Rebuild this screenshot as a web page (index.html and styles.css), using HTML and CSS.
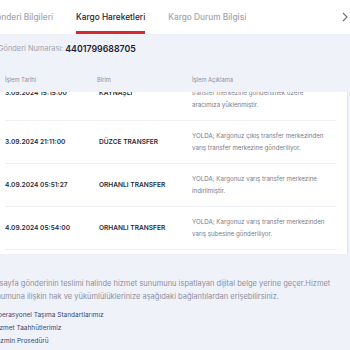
FILE: index.html
```html
<!DOCTYPE html>
<html lang="tr">

<head>
    <meta charset="UTF-8">
    <meta name="viewport" content="width=device-width, initial-scale=1.0">
    <title>Kargo Takip</title>
    <link rel="stylesheet" href="styles.css">
</head>

<body>
    <div class="page">
        <div class="tabs">
            <div class="tab">Gönderi Bilgileri</div>
            <div class="tab active">Kargo Hareketleri</div>
            <div class="tab">Kargo Durum Bilgisi</div>
            <svg class="tab-next" width="6" height="10" viewBox="0 0 6 10">
                <path d="M1 1 L5 5 L1 9" fill="none" stroke="#6b6b78" stroke-width="1.1" />
            </svg>
        </div>

        <div class="tracking">
            Gönderi Numarası: <strong>4401799688705</strong>
        </div>

        <div class="table">
            <div class="table-head">
                <div class="col-date">İşlem Tarihi</div>
                <div class="col-unit">Birim</div>
                <div class="col-desc">İşlem Açıklama</div>
            </div>
            <div class="table-body">
                <div class="rows">
                    <div class="row">
                        <div class="col-date">3.09.2024 15:15:00</div>
                        <div class="col-unit">KAYNAŞLI</div>
                        <div class="col-desc">YOLDA; Kargonuz çıkış şubesinden<br>transfer merkezine gönderilmek üzere<br>aracımıza yüklenmiştir.</div>
                    </div>
                    <div class="row">
                        <div class="col-date">3.09.2024 21:11:00</div>
                        <div class="col-unit">DÜZCE TRANSFER</div>
                        <div class="col-desc">YOLDA; Kargonuz çıkış transfer merkezinden varış transfer merkezine gönderiliyor.</div>
                    </div>
                    <div class="row">
                        <div class="col-date">4.09.2024 05:51:27</div>
                        <div class="col-unit">ORHANLI TRANSFER</div>
                        <div class="col-desc">YOLDA; Kargonuz varış transfer merkezine indirilmiştir.</div>
                    </div>
                    <div class="row">
                        <div class="col-date">4.09.2024 05:54:00</div>
                        <div class="col-unit">ORHANLI TRANSFER</div>
                        <div class="col-desc">YOLDA; Kargonuz varış transfer merkezinden varış şubesine gönderiliyor.</div>
                    </div>
                </div>
            </div>
        </div>

        <div class="info">
            <p>Bu sayfa gönderinin teslimi halinde hizmet sunumunu ispatlayan dijital belge yerine geçer.Hizmet<br>
                sunumuna ilişkin hak ve yükümlülüklerinize aşağıdaki bağlantılardan erişebilirsiniz.</p>
            <ul class="links">
                <li>Operasyonel Taşıma Standartlarımız</li>
                <li>Hizmet Taahhütlerimiz</li>
                <li>Tazmin Prosedürü</li>
            </ul>
        </div>
    </div>
</body>

</html>
```

FILE: styles.css
```css
* {
    margin: 0;
    padding: 0;
    box-sizing: border-box;
}

body {
    font-family: 'Inter', 'Liberation Sans', sans-serif;
    background: #eff2f9;
    overflow: hidden;
    color: #262736;
}

.page {
    width: 360px;
    margin-left: -7px;
}

.tabs {
    display: flex;
    align-items: stretch;
    gap: 23px;
    height: 34px;
    background: #ffffff;
    position: relative;
}

.tab {
    display: flex;
    align-items: center;
    font-size: 8.3px;
    font-weight: 500;
    color: #a4a4b0;
    border-bottom: 3px solid transparent;
    padding-top: 3px;
    white-space: nowrap;
}

.tab:first-child {
    margin-left: -3px;
}

.tab.active {
    color: #1f2030;
    border-bottom-color: #d8282f;
}

.tab-next {
    position: absolute;
    right: 5px;
    top: 12px;
}

.tracking {
    height: 29px;
    display: flex;
    align-items: center;
    padding-left: 5px;
    font-size: 7.4px;
    color: #a2a2ae;
}

.tracking strong {
    color: #1f2030;
    font-weight: 600;
    font-size: 8.8px;
    margin-left: 2px;
}

.table {
    width: 355px;
    padding-left: 12px;
}

.table-head {
    display: flex;
    align-items: center;
    height: 29px;
    padding-top: 4px;
    font-size: 5.8px;
    color: #8e8e9c;
}

.table-body {
    background: #ffffff;
    height: 162px;
    overflow: hidden;
    margin-left: -12px;
    padding-left: 12px;
    border-right: 1px solid #e4e6ee;
}

.rows {
    margin-top: -26px;
    width: 331px;
}

.row {
    display: flex;
    align-items: center;
    padding: 9.5px 0;
    border-bottom: 1px solid #eeeff4;
}

.col-date {
    width: 92px;
    flex-shrink: 0;
}

.col-unit {
    width: 95px;
    flex-shrink: 0;
}

.col-desc {
    flex: 1;
}

.row .col-date,
.row .col-unit {
    font-size: 6.6px;
    font-weight: 600;
    color: #2a2b3a;
}

.row .col-unit {
    padding-left: 2px;
}

.row .col-desc {
    font-size: 6.2px;
    line-height: 11.5px;
    color: #7a7a88;
    padding-right: 6px;
}

.info {
    padding-top: 23px;
}

.info p {
    font-size: 7.5px;
    line-height: 13px;
    color: #8f8fa0;
    margin-left: -5px;
    white-space: nowrap;
}

.links {
    list-style: none;
    margin-top: 6px;
    font-size: 6.5px;
    line-height: 13px;
    color: #3e4571;
}
```
